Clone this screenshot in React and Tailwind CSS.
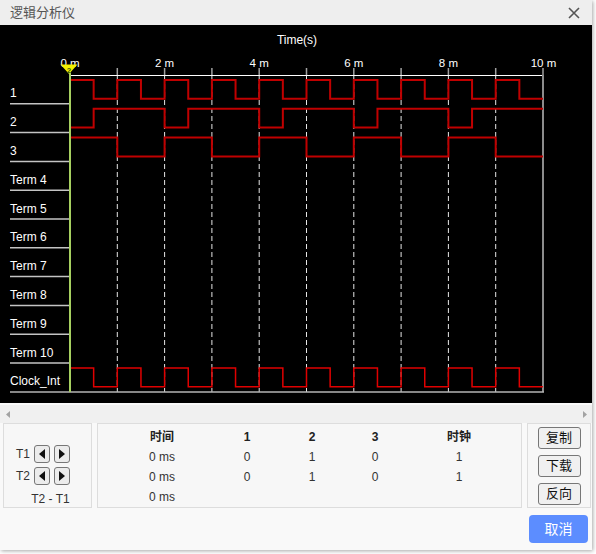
import React from "react";

const FONT = { fontFamily: '"Liberation Sans", Arial, "Noto Sans CJK SC", sans-serif' };

const X0 = 70;
const XE = 543;
const P = (XE - X0) / 10;
const ROW = 28.8;
const TOP = 75;

const labels = ["1", "2", "3", "Term 4", "Term 5", "Term 6", "Term 7", "Term 8", "Term 9", "Term 10", "Clock_Int"];

function wavePath(rowIdx, fn) {
  const top = TOP + ROW * rowIdx;
  const hi = top + 5;
  const lo = top + 23.8;
  const y = (v) => (v ? hi : lo);
  let v = fn(0);
  let d = `M${X0} ${y(v)}`;
  for (let k = 0; k < 20; k++) {
    const x = X0 + (P / 2) * (k + 1);
    d += ` H${x.toFixed(2)}`;
    if (k < 19) {
      const nv = fn(k + 1);
      if (nv !== v) {
        d += ` V${y(nv)}`;
        v = nv;
      }
    }
  }
  return d;
}

const r1 = (k) => (k % 2 === 0 ? 1 : 0);
const r3 = (k) => (Math.floor(k / 2) % 2 === 0 ? 1 : 0);
const r2 = (k) => (r1(k) && r3(k) ? 0 : 1);

function Scope() {
  const grid = [];
  for (let k = 1; k <= 9; k++) grid.push(X0 + P * k);
  return (
    <svg width="592" height="378" viewBox="0 25 592 378" style={FONT}>
      <rect x="0" y="25" width="592" height="378" fill="#000" />
      <text x="297" y="44" fill="#fff" fontSize="12" textAnchor="middle">Time(s)</text>
      {[0, 2, 4, 6, 8, 10].map((k) => (
        <text key={k} x={X0 + P * k + (k === 10 ? 0.5 : 0)} y="66.5" fill="#fff" fontSize="11.5" textAnchor="middle">
          {k} m
        </text>
      ))}
      {[...grid, XE].map((x, i) => (
        <line key={"t" + i} x1={x} x2={x} y1="68" y2="75" stroke="#a0a0a0" strokeWidth="1.5" />
      ))}
      {grid.map((x, i) => (
        <line key={"g" + i} x1={x} x2={x} y1="76" y2="392" stroke="#e6e6e6" strokeWidth="1" strokeDasharray="5 3" />
      ))}
      <line x1={X0} x2={XE} y1="75.5" y2="75.5" stroke="#fff" strokeWidth="1" />
      <line x1={XE} x2={XE} y1="75" y2="392" stroke="#8c8c8c" strokeWidth="2" />
      <line x1="10" x2={XE + 1} y1="392" y2="392" stroke="#b4b4b4" strokeWidth="1.5" />
      {labels.map((l, i) => {
        const sep = TOP + ROW * (i + 1);
        return (
          <g key={l}>
            <text x="10" y={sep - 6.5} fill="#fff" fontSize="12">{l}</text>
            {i < 10 && <line x1="10" x2="69" y1={sep} y2={sep} stroke="#c4c4c4" strokeWidth="1.5" />}
          </g>
        );
      })}
      <path d={wavePath(0, r1)} fill="none" stroke="#c00000" strokeWidth="2" />
      <path d={wavePath(1, r2)} fill="none" stroke="#c00000" strokeWidth="2" />
      <path d={wavePath(2, r3)} fill="none" stroke="#c00000" strokeWidth="2" />
      <path d={wavePath(10, r1)} fill="none" stroke="#e00000" strokeWidth="1.5" />
      <line x1={X0} x2={X0} y1="72" y2="392" stroke="#a6d060" strokeWidth="2" />
      <polygon points="60.5,64.5 77.5,64.5 72.5,70 69,74 65.5,70" fill="#f2f200" />
      <text x="69" y="72.5" fill="#3c5a10" fontSize="8" fontWeight="bold" textAnchor="middle">2</text>
    </svg>
  );
}

function Tri({ dir }) {
  return (
    <svg width="6" height="10" viewBox="0 0 6 10">
      <path d={dir === "l" ? "M6 0 L0 5 L6 10Z" : "M0 0 L6 5 L0 10Z"} fill="#111" />
    </svg>
  );
}

function SmallBtn({ dir }) {
  return (
    <div className="w-[16px] h-[18px] border border-[#777] rounded-[3px] bg-[#ececec] flex items-center justify-center">
      <Tri dir={dir} />
    </div>
  );
}

function TRow({ label }) {
  return (
    <div className="flex items-center">
      <span className="w-[18px] text-[12px] text-[#333]">{label}</span>
      <div className="flex gap-[4px]">
        <SmallBtn dir="l" />
        <SmallBtn dir="r" />
      </div>
    </div>
  );
}

function ActBtn({ children }) {
  return (
    <div className="w-[43px] h-[22px] border border-[#777] rounded-[3px] bg-[#f0f0f0] flex items-center justify-center text-[13px] text-[#111]">
      {children}
    </div>
  );
}

export default function App() {
  const cols = "grid grid-cols-[128px_42px_88px_38px_130px] text-center h-[20px] items-center";
  return (
    <div className="w-[596px] h-[554px] bg-white overflow-hidden" style={FONT}>
      <div className="w-[592px] h-[550px] bg-[#f9f9f9] flex flex-col shadow-[1px_1px_4px_rgba(0,0,0,0.35)]">
        <div className="h-[25px] bg-[#eeeeee] flex items-center justify-between pl-[10px] pr-[12px]">
          <span className="text-[13px] text-[#555]">逻辑分析仪</span>
          <svg width="12" height="12" viewBox="0 0 12 12">
            <path d="M1 1 L11 11 M11 1 L1 11" stroke="#555" strokeWidth="1.6" />
          </svg>
        </div>
        <div className="h-[378px] bg-black">
          <Scope />
        </div>
        <div className="h-[2px] bg-[#fafafa]" />
        <div className="h-[18px] bg-[#f0f0f0] flex items-center justify-between pl-[6px] pr-[5px]">
          <svg width="4" height="7" viewBox="0 0 4 7"><path d="M4 0 L0 3.5 L4 7Z" fill="#a3a3a3" /></svg>
          <svg width="4" height="7" viewBox="0 0 4 7"><path d="M0 0 L4 3.5 L0 7Z" fill="#a3a3a3" /></svg>
        </div>
        <div className="flex gap-[5px] pl-[3px] h-[85px]">
          <div className="w-[89px] h-full border border-[#dddddd] bg-[#f7f7f7] flex flex-col pt-[21px] pl-[12px] gap-[4px]">
            <TRow label="T1" />
            <TRow label="T2" />
            <div className="text-[12px] text-[#333] w-[64px] text-center mt-[1px] pl-[5px]">T2 - T1</div>
          </div>
          <div className="w-[425px] h-full border border-[#dddddd] bg-[#f7f7f7] pt-[3px] text-[12px] text-[#333]">
            <div className={cols + " font-bold text-[#222]"}>
              <span>时间</span><span>1</span><span>2</span><span>3</span><span>时钟</span>
            </div>
            <div className={cols}>
              <span>0 ms</span><span>0</span><span>1</span><span>0</span><span>1</span>
            </div>
            <div className={cols}>
              <span>0 ms</span><span>0</span><span>1</span><span>0</span><span>1</span>
            </div>
            <div className={cols}>
              <span>0 ms</span><span></span><span></span><span></span><span></span>
            </div>
          </div>
          <div className="w-[64px] h-full border border-[#dddddd] bg-[#f7f7f7] flex flex-col items-center pt-[3px] gap-[6px]">
            <ActBtn>复制</ActBtn>
            <ActBtn>下载</ActBtn>
            <ActBtn>反向</ActBtn>
          </div>
        </div>
        <div className="flex justify-end pr-[4px] pt-[7px]">
          <div className="w-[59px] h-[28px] rounded-[4px] bg-[#5c8dff] text-white text-[14px] flex items-center justify-center">
            取消
          </div>
        </div>
      </div>
    </div>
  );
}
